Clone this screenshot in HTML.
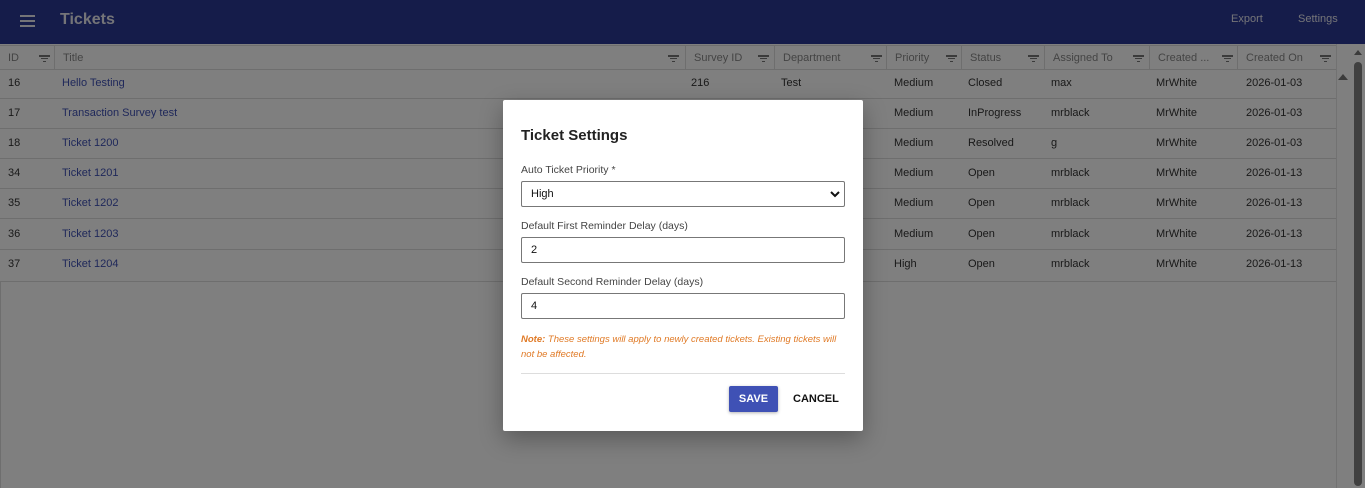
<!DOCTYPE html>
<html><head><meta charset="utf-8"><style>
*{box-sizing:border-box;margin:0;padding:0}
html,body{background:#fff}
body{width:1365px;height:488px;overflow:hidden;font-family:"Liberation Sans",sans-serif;position:relative}
.top{position:absolute;left:0;top:0;width:1365px;height:44px;background:#2a3894;color:#e8e8f0}
.top .t{position:absolute;left:60px;top:11px;font-size:16px;font-weight:bold}
.top .m{position:absolute;left:20px;top:15px;width:15px}
.top .m i{display:block;height:2px;background:#e8e8f0;margin-bottom:3px}
.top .e{position:absolute;top:13px;font-size:11px}
.row{position:absolute;left:0;width:1336px;height:30px;border-bottom:1px solid #ddd;font-size:11px;color:#333}
.hdr{top:1px;height:25px;color:#888;border-top:1px solid #ddd}
.c{position:absolute;top:0;height:100%;padding-left:8px;line-height:29px;white-space:nowrap}
.hdr .c{line-height:24px;border-right:1px solid #ddd}
.lnk{color:#3f51b5}
.f{position:absolute;top:9px;width:11px;height:7px}
.f i{display:block;height:1.5px;background:#777;margin:0 auto 1.3px}
.ov{position:absolute;left:0;top:0;width:1365px;height:488px;background:rgba(0,0,0,.5)}
.modal{position:absolute;left:503px;top:100px;width:360px;height:331px;background:#fff;box-shadow:0 8px 24px rgba(0,0,0,.3);border-radius:2px}
.modal h2{position:absolute;left:18px;top:27px;font-size:15px;font-weight:bold;color:#222}
.lbl{position:absolute;left:18px;font-size:10.5px;color:#444}
.inp{position:absolute;left:18px;width:324px;height:26px;border:1px solid #777;border-radius:2px;font-size:11px;line-height:24px;padding-left:9px;color:#111}
.note{position:absolute;left:18px;top:232px;width:320px;font-size:9.5px;font-style:italic;color:#e07a26;line-height:15px}
.hr{position:absolute;left:18px;top:273px;width:324px;height:1px;background:#ddd}
.save{position:absolute;left:226px;top:286px;width:49px;height:26px;background:#3f51b5;color:#fff;font-size:11px;font-weight:bold;text-align:center;line-height:26px;border-radius:2px;box-shadow:0 1px 3px rgba(0,0,0,.3)}
.cancel{position:absolute;left:290px;top:286px;font-size:11px;font-weight:bold;line-height:26px;color:#111}
</style></head><body>
<div class="top"><div class="m"><i></i><i></i><i></i></div><div class="t">Tickets</div>
<div class="e" style="left:1231px">Export</div><div class="e" style="left:1298px">Settings</div></div>

<div class="row hdr" style="top:45px">
<div class="c" style="left:0;width:55px">ID<div class="f" style="left:39px"><i style="width:11px"></i><i style="width:7px"></i><i style="width:3px"></i></div></div>
<div class="c" style="left:55px;width:631px">Title<div class="f" style="left:613px"><i style="width:11px"></i><i style="width:7px"></i><i style="width:3px"></i></div></div>
<div class="c" style="left:686px;width:89px">Survey ID<div class="f" style="left:72px"><i style="width:11px"></i><i style="width:7px"></i><i style="width:3px"></i></div></div>
<div class="c" style="left:775px;width:112px">Department<div class="f" style="left:96px"><i style="width:11px"></i><i style="width:7px"></i><i style="width:3px"></i></div></div>
<div class="c" style="left:887px;width:75px">Priority<div class="f" style="left:59px"><i style="width:11px"></i><i style="width:7px"></i><i style="width:3px"></i></div></div>
<div class="c" style="left:962px;width:83px">Status<div class="f" style="left:66px"><i style="width:11px"></i><i style="width:7px"></i><i style="width:3px"></i></div></div>
<div class="c" style="left:1045px;width:105px">Assigned To<div class="f" style="left:88px"><i style="width:11px"></i><i style="width:7px"></i><i style="width:3px"></i></div></div>
<div class="c" style="left:1150px;width:88px">Created ...<div class="f" style="left:72px"><i style="width:11px"></i><i style="width:7px"></i><i style="width:3px"></i></div></div>
<div class="c" style="left:1238px;width:98px;border-right:none">Created On<div class="f" style="left:82px"><i style="width:11px"></i><i style="width:7px"></i><i style="width:3px"></i></div></div>
</div>

<div class="row" style="top:69px"><div class="c" style="left:0">16</div><div class="c lnk" style="left:54px">Hello Testing</div><div class="c" style="left:683px">216</div><div class="c" style="left:773px">Test</div><div class="c" style="left:886px">Medium</div><div class="c" style="left:960px">Closed</div><div class="c" style="left:1043px">max</div><div class="c" style="left:1148px">MrWhite</div><div class="c" style="left:1238px">2026-01-03</div></div>
<div class="row" style="top:99px"><div class="c" style="left:0">17</div><div class="c lnk" style="left:54px">Transaction Survey test</div><div class="c" style="left:886px">Medium</div><div class="c" style="left:960px">InProgress</div><div class="c" style="left:1043px">mrblack</div><div class="c" style="left:1148px">MrWhite</div><div class="c" style="left:1238px">2026-01-03</div></div>
<div class="row" style="top:129px"><div class="c" style="left:0">18</div><div class="c lnk" style="left:54px">Ticket 1200</div><div class="c" style="left:886px">Medium</div><div class="c" style="left:960px">Resolved</div><div class="c" style="left:1043px">g</div><div class="c" style="left:1148px">MrWhite</div><div class="c" style="left:1238px">2026-01-03</div></div>
<div class="row" style="top:159px"><div class="c" style="left:0">34</div><div class="c lnk" style="left:54px">Ticket 1201</div><div class="c" style="left:886px">Medium</div><div class="c" style="left:960px">Open</div><div class="c" style="left:1043px">mrblack</div><div class="c" style="left:1148px">MrWhite</div><div class="c" style="left:1238px">2026-01-13</div></div>
<div class="row" style="top:189px"><div class="c" style="left:0">35</div><div class="c lnk" style="left:54px">Ticket 1202</div><div class="c" style="left:886px">Medium</div><div class="c" style="left:960px">Open</div><div class="c" style="left:1043px">mrblack</div><div class="c" style="left:1148px">MrWhite</div><div class="c" style="left:1238px">2026-01-13</div></div>
<div class="row" style="top:220px"><div class="c" style="left:0">36</div><div class="c lnk" style="left:54px">Ticket 1203</div><div class="c" style="left:886px">Medium</div><div class="c" style="left:960px">Open</div><div class="c" style="left:1043px">mrblack</div><div class="c" style="left:1148px">MrWhite</div><div class="c" style="left:1238px">2026-01-13</div></div>
<div class="row" style="top:250px;height:32px"><div class="c" style="left:0">37</div><div class="c lnk" style="left:54px">Ticket 1204</div><div class="c" style="left:886px">High</div><div class="c" style="left:960px">Open</div><div class="c" style="left:1043px">mrblack</div><div class="c" style="left:1148px">MrWhite</div><div class="c" style="left:1238px">2026-01-13</div></div>

<div style="position:absolute;left:0;top:282px;width:1px;height:206px;background:#ddd"></div>
<div style="position:absolute;left:1336px;top:44px;width:1px;height:444px;background:#e4e4e4"></div>
<div style="position:absolute;left:1338px;top:74px;width:0;height:0;border-left:5px solid transparent;border-right:5px solid transparent;border-bottom:6px solid #777"></div>
<div style="position:absolute;left:1354px;top:50px;width:0;height:0;border-left:4px solid transparent;border-right:4px solid transparent;border-bottom:5px solid #777"></div>
<div style="position:absolute;left:1354px;top:62px;width:8px;height:424px;background:#808080;border-radius:4px"></div>

<div class="ov"></div>

<div class="modal">
<h2>Ticket Settings</h2>
<div class="lbl" style="top:64px">Auto Ticket Priority *</div>
<div class="inp" style="top:81px">High<svg style="position:absolute;right:4px;top:8px" width="10" height="8" viewBox="0 0 10 8"><path d="M1 2l4 4 4-4" stroke="#111" stroke-width="2" fill="none"/></svg></div>
<div class="lbl" style="top:120px">Default First Reminder Delay (days)</div>
<div class="inp" style="top:137px">2</div>
<div class="lbl" style="top:176px">Default Second Reminder Delay (days)</div>
<div class="inp" style="top:193px">4</div>
<div class="note"><b>Note:</b> These settings will apply to newly created tickets. Existing tickets will not be affected.</div>
<div class="hr"></div>
<div class="save">SAVE</div><div class="cancel">CANCEL</div>
</div>
</body></html>
